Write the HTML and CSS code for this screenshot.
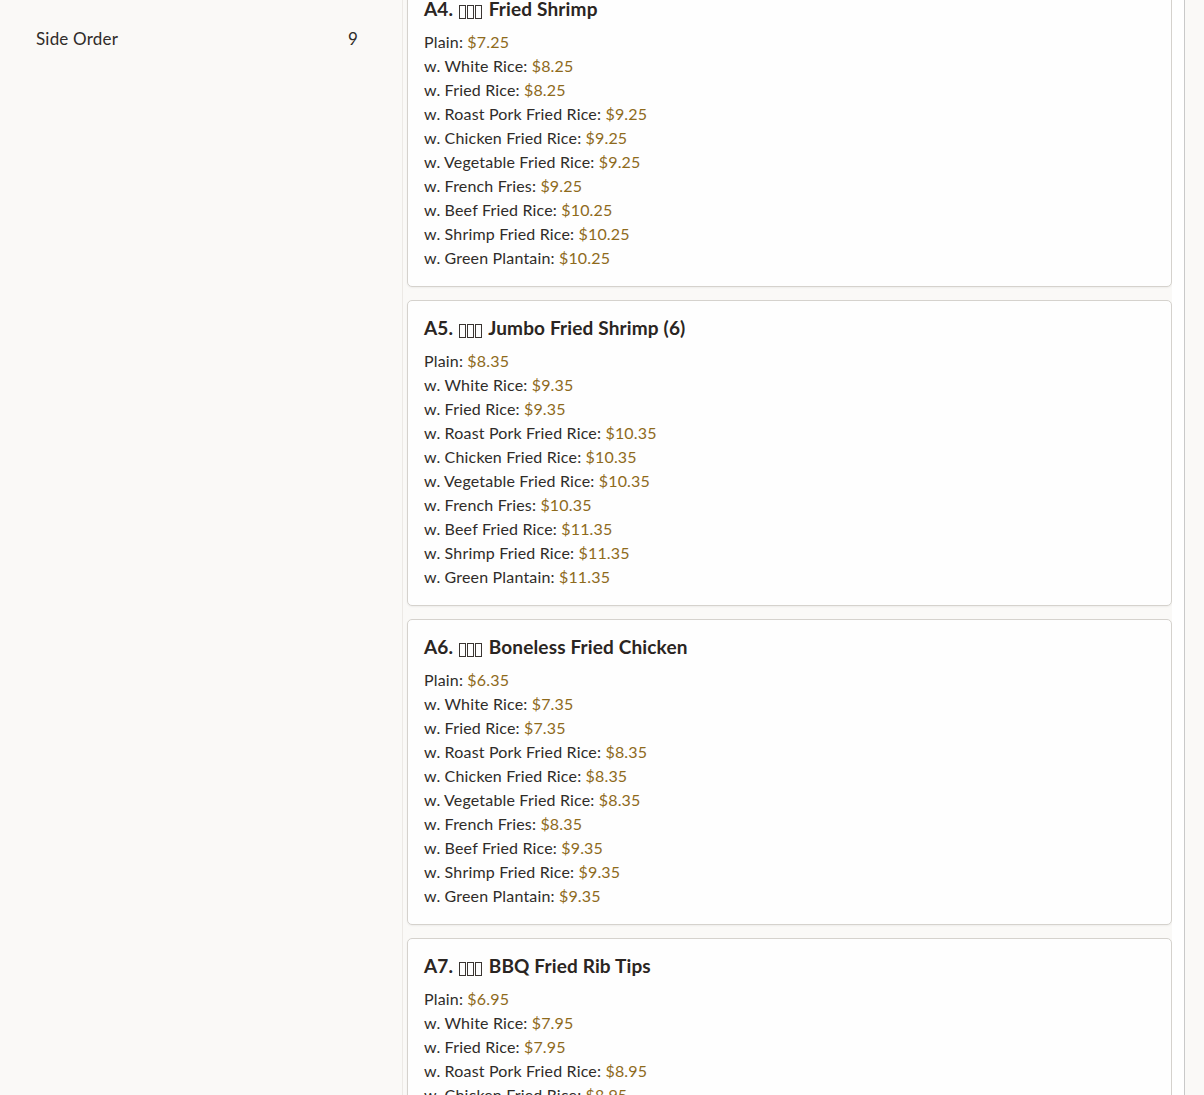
FILE: index.html
```html
<!DOCTYPE html>
<html lang="en">
<head>
<meta charset="utf-8">
<title>Menu</title>
<link rel="stylesheet" href="styles.css">
</head>
<body>
<div class="page">
  <aside class="sidebar">
    <div class="cat-item"><span class="cat-name">Side Order</span><span class="cat-count">9</span></div>
  </aside>
  <main class="main">
    <div class="list">
      <section class="card">
        <h3 class="title">A4. <span class="tofu"><i></i><i></i><i></i></span> Fried Shrimp</h3>
        <ul class="prices">
          <li>Plain: <span class="p">$7.25</span></li>
          <li>w. White Rice: <span class="p">$8.25</span></li>
          <li>w. Fried Rice: <span class="p">$8.25</span></li>
          <li>w. Roast Pork Fried Rice: <span class="p">$9.25</span></li>
          <li>w. Chicken Fried Rice: <span class="p">$9.25</span></li>
          <li>w. Vegetable Fried Rice: <span class="p">$9.25</span></li>
          <li>w. French Fries: <span class="p">$9.25</span></li>
          <li>w. Beef Fried Rice: <span class="p">$10.25</span></li>
          <li>w. Shrimp Fried Rice: <span class="p">$10.25</span></li>
          <li>w. Green Plantain: <span class="p">$10.25</span></li>
        </ul>
      </section>
      <section class="card">
        <h3 class="title">A5. <span class="tofu"><i></i><i></i><i></i></span> Jumbo Fried Shrimp (6)</h3>
        <ul class="prices">
          <li>Plain: <span class="p">$8.35</span></li>
          <li>w. White Rice: <span class="p">$9.35</span></li>
          <li>w. Fried Rice: <span class="p">$9.35</span></li>
          <li>w. Roast Pork Fried Rice: <span class="p">$10.35</span></li>
          <li>w. Chicken Fried Rice: <span class="p">$10.35</span></li>
          <li>w. Vegetable Fried Rice: <span class="p">$10.35</span></li>
          <li>w. French Fries: <span class="p">$10.35</span></li>
          <li>w. Beef Fried Rice: <span class="p">$11.35</span></li>
          <li>w. Shrimp Fried Rice: <span class="p">$11.35</span></li>
          <li>w. Green Plantain: <span class="p">$11.35</span></li>
        </ul>
      </section>
      <section class="card">
        <h3 class="title">A6. <span class="tofu"><i></i><i></i><i></i></span> Boneless Fried Chicken</h3>
        <ul class="prices">
          <li>Plain: <span class="p">$6.35</span></li>
          <li>w. White Rice: <span class="p">$7.35</span></li>
          <li>w. Fried Rice: <span class="p">$7.35</span></li>
          <li>w. Roast Pork Fried Rice: <span class="p">$8.35</span></li>
          <li>w. Chicken Fried Rice: <span class="p">$8.35</span></li>
          <li>w. Vegetable Fried Rice: <span class="p">$8.35</span></li>
          <li>w. French Fries: <span class="p">$8.35</span></li>
          <li>w. Beef Fried Rice: <span class="p">$9.35</span></li>
          <li>w. Shrimp Fried Rice: <span class="p">$9.35</span></li>
          <li>w. Green Plantain: <span class="p">$9.35</span></li>
        </ul>
      </section>
      <section class="card">
        <h3 class="title">A7. <span class="tofu"><i></i><i></i><i></i></span> BBQ Fried Rib Tips</h3>
        <ul class="prices">
          <li>Plain: <span class="p">$6.95</span></li>
          <li>w. White Rice: <span class="p">$7.95</span></li>
          <li>w. Fried Rice: <span class="p">$7.95</span></li>
          <li>w. Roast Pork Fried Rice: <span class="p">$8.95</span></li>
          <li>w. Chicken Fried Rice: <span class="p">$8.95</span></li>
          <li>w. Vegetable Fried Rice: <span class="p">$8.95</span></li>
          <li>w. French Fries: <span class="p">$8.95</span></li>
          <li>w. Beef Fried Rice: <span class="p">$9.95</span></li>
          <li>w. Shrimp Fried Rice: <span class="p">$9.95</span></li>
          <li>w. Green Plantain: <span class="p">$9.95</span></li>
        </ul>
      </section>
    </div>
    <div class="track"></div>
  </main>
</div>
</body>
</html>
```

FILE: styles.css
```css
html, body {
  margin: 0;
  padding: 0;
  background: #faf9f7;
  height: 100%;
  overflow: hidden;
}
body {
  font-family: "Lato", "Noto Sans", sans-serif;
  color: #2b2825;
}
.page {
  display: flex;
  height: 1095px;
  overflow: hidden;
}
.sidebar {
  width: 403px;
  border-right: 1px solid #ece9e5;
  box-sizing: border-box;
  flex: none;
  padding: 27px 44px 0 36px;
}
.cat-item {
  display: flex;
  justify-content: space-between;
  align-items: center;
  font-size: 17px;
  line-height: 24px;
  letter-spacing: 0.2px;
  color: #2f2c29;
}
.main {
  flex: none;
  display: flex;
  padding-left: 4px;
}
.list {
  width: 765px;
  display: flex;
  flex-direction: column;
  gap: 13px;
  margin-top: -19px;
}
.card {
  background: #fefefe;
  border: 1px solid #d5d2cd;
  border-radius: 5px;
  box-shadow: 0 1px 2px rgba(0, 0, 0, 0.05);
  padding: 16px;
  flex: none;
}
.title {
  margin: 0 0 11px;
  font-size: 19px;
  line-height: 21px;
  font-weight: 700;
  letter-spacing: 0.15px;
  color: #2a2522;
}
.tofu {
  display: inline-flex;
  gap: 1px;
  margin: 0 2px 0 1px;
  vertical-align: -3px;
}
.tofu i {
  display: block;
  width: 5px;
  height: 12px;
  border: 1px solid #3a3532;
}
.prices {
  list-style: none;
  margin: 0;
  padding: 0;
  font-size: 16px;
  line-height: 24px;
  letter-spacing: 0.17px;
  color: #2f2c29;
}
.p {
  color: #8e6a1c;
}
.track {
  width: 12px;
  flex: none;
  background: #ffffff;
  border-right: 1px solid #c9c9c9;
}
```
